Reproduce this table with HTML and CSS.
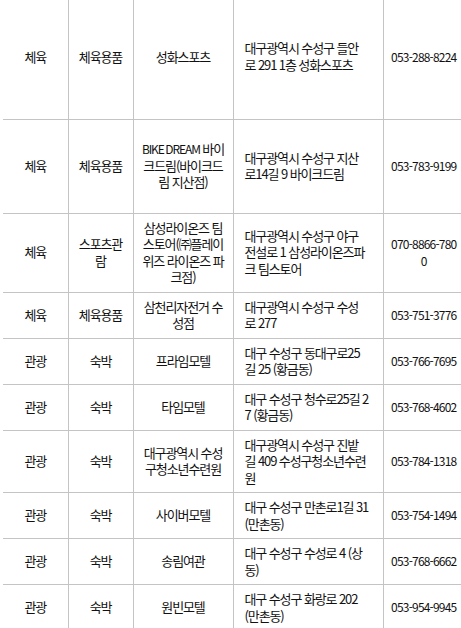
FILE: index.html
```html
<!DOCTYPE html>
<html lang="ko">
<head>
<meta charset="utf-8">
<title>시설 목록</title>
<link rel="stylesheet" href="styles.css">
</head>
<body>
<table class="list">
  <colgroup>
    <col class="c-cat">
    <col class="c-sub">
    <col class="c-name">
    <col class="c-addr">
    <col class="c-tel">
  </colgroup>
  <tbody>
    <tr class="row-first">
      <td>체육</td><td>체육용품</td><td class="name">성화스포츠</td>
      <td class="addr">대구광역시 수성구 들안로 291 1층 성화스포츠</td><td class="tel">053-288-8224</td>
    </tr>
    <tr class="row-tall">
      <td>체육</td><td>체육용품</td><td class="name"><span lang="en">BIKE DREAM</span> 바이크드림(바이크드림 지산점)</td>
      <td class="addr">대구광역시 수성구 지산로14길 9 바이크드림</td><td class="tel">053-783-9199</td>
    </tr>
    <tr>
      <td>체육</td><td>스포츠관람</td><td class="name">삼성라이온즈 팀스토어(㈜플레이위즈 라이온즈 파크점)</td>
      <td class="addr">대구광역시 수성구 야구전설로 1 삼성라이온즈파크 팀스토어</td><td class="tel">070-8866-7800</td>
    </tr>
    <tr>
      <td>체육</td><td>체육용품</td><td class="name">삼천리자전거 수성점</td>
      <td class="addr">대구광역시 수성구 수성로 277</td><td class="tel">053-751-3776</td>
    </tr>
    <tr>
      <td>관광</td><td>숙박</td><td class="name">프라임모텔</td>
      <td class="addr">대구 수성구 동대구로25길 25 (황금동)</td><td class="tel">053-766-7695</td>
    </tr>
    <tr>
      <td>관광</td><td>숙박</td><td class="name">타임모텔</td>
      <td class="addr">대구 수성구 청수로25길 27 (황금동)</td><td class="tel">053-768-4602</td>
    </tr>
    <tr>
      <td>관광</td><td>숙박</td><td class="name">대구광역시 수성구청소년수련원</td>
      <td class="addr">대구광역시 수성구 진밭길 409 수성구청소년수련원</td><td class="tel">053-784-1318</td>
    </tr>
    <tr>
      <td>관광</td><td>숙박</td><td class="name">사이버모텔</td>
      <td class="addr">대구 수성구 만촌로1길 31 (만촌동)</td><td class="tel">053-754-1494</td>
    </tr>
    <tr>
      <td>관광</td><td>숙박</td><td class="name">송림여관</td>
      <td class="addr">대구 수성구 수성로 4 (상동)</td><td class="tel">053-768-6662</td>
    </tr>
    <tr>
      <td>관광</td><td>숙박</td><td class="name">원빈모텔</td>
      <td class="addr">대구 수성구 화랑로 202 (만촌동)</td><td class="tel">053-954-9945</td>
    </tr>
  </tbody>
</table>
</body>
</html>
```
FILE: styles.css
```css
html, body {
  margin: 0;
  padding: 0;
  background: #fff;
  overflow: hidden;
}

.list {
  margin: -5px 0 0 3px;
  width: 461px;
  border-collapse: collapse;
  table-layout: fixed;
  font-family: "Noto Sans CJK KR", "Noto Sans", sans-serif;
  font-size: 13px;
  letter-spacing: -1.1px;
  line-height: 16.5px;
  color: #111;
  font-kerning: none;
}

.c-cat { width: 65px; }
.c-sub { width: 65px; }
.c-name { width: 100px; }
.c-addr { width: 150px; }
.c-tel { width: 81px; }

.list td {
  border-top: 1px solid #c4c4c4;
  border-bottom: 1px solid #c4c4c4;
  border-left: 1px solid #c4c4c4;
  padding: 6px 7px;
  text-align: center;
  vertical-align: middle;
  word-break: break-all;
}

.list td:first-child {
  border-left: none;
}

.list tr:first-child td {
  border-top: none;
}

.list td.addr {
  text-align: left;
  padding: 6px 13.85px 6px 11px;
}

.list td.tel {
  padding: 6px 6px;
  font-size: 12px;
  letter-spacing: -0.8px;
}

.list [lang="en"] {
  font-size: 12px;
  letter-spacing: -1.1px;
}

.row-first {
  height: 124px;
}

.row-tall {
  height: 94px;
}
```
